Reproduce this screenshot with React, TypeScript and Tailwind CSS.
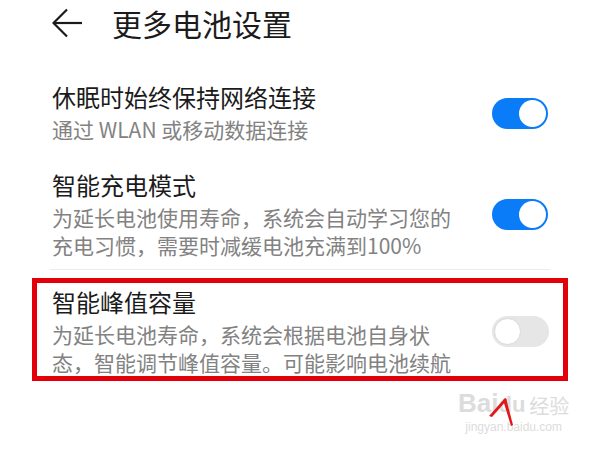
import React from "react";

type Row = { title: string; lines: string[]; on: boolean };

function Toggle({ on }: { on: boolean }) {
  return on ? (
    <div className="flex h-[31px] w-[56px] shrink-0 items-center justify-end rounded-full bg-[#0a7cf7] p-[2px]">
      <div className="h-[27px] w-[27px] rounded-full bg-white" />
    </div>
  ) : (
    <div className="flex h-[31px] w-[57px] shrink-0 items-center justify-start rounded-full bg-[#e6e6e6] p-[2px]">
      <div className="h-[27px] w-[27px] rounded-full border border-[#d9d9d9] bg-white" />
    </div>
  );
}

function SettingText({ row }: { row: Row }) {
  return (
    <div className="flex flex-col">
      <div className="text-[24px] leading-[32px] text-[#1b1b1b]">{row.title}</div>
      <div className="mt-[2px] text-[21px] leading-[28px] text-[#828282]">
        {row.lines.map((l) => (
          <div key={l}>{l}</div>
        ))}
      </div>
    </div>
  );
}

export default function App() {
  const rows: Row[] = [
    { title: "休眠时始终保持网络连接", lines: ["通过 WLAN 或移动数据连接"], on: true },
    {
      title: "智能充电模式",
      lines: ["为延长电池使用寿命，系统会自动学习您的", "充电习惯，需要时减缓电池充满到100%"],
      on: true,
    },
  ];
  const peak: Row = {
    title: "智能峰值容量",
    lines: ["为延长电池寿命，系统会根据电池自身状", "态，智能调节峰值容量。可能影响电池续航"],
    on: false,
  };

  return (
    <div
      className="relative h-[450px] w-[600px] overflow-hidden bg-white"
      style={{ fontFamily: '"Noto Sans CJK SC", "Noto Sans", sans-serif' }}
    >
      <header className="flex h-[46px] items-center pl-[52px]">
        <svg width="31" height="30" viewBox="0 0 31 30" fill="none" stroke="#1b1b1b" strokeWidth="2.2">
          <path d="M15 1.5 L1.5 15 L15 28.5" />
          <path d="M1.5 15 H30" />
        </svg>
        <h1 className="ml-[29px] text-[30px] leading-[40px] text-[#1b1b1b]">更多电池设置</h1>
      </header>

      <main className="px-[32px]">
        <div className="mt-[35px] flex items-center justify-between pl-[20px] pr-[20px]">
          <SettingText row={rows[0]} />
          <div className="mt-[2px]">
            <Toggle on />
          </div>
        </div>

        <div className="mt-[26px] flex items-center justify-between pl-[20px] pr-[20px]">
          <SettingText row={rows[1]} />
          <Toggle on />
        </div>

        <div className="mx-[18px] mt-[10px] h-px bg-[#ebebeb]" />

        <div className="mt-[8px] flex items-center justify-between border-[5px] border-[#e3000b] pl-[15px] pr-[14px] pt-[3px]">
          <SettingText row={peak} />
          <Toggle on={false} />
        </div>
      </main>

      {/* baidu watermark + annotation arrow */}
      <div className="absolute left-[458px] top-[390px] flex flex-col items-center text-[#dcdcdc]">
        <div className="flex items-end leading-none" style={{ fontFamily: '"Liberation Sans", sans-serif' }}>
          <span className="text-[26px] font-bold">Bai</span>
          <span className="text-[22px] font-bold">du</span>
          <span className="ml-[4px] text-[20px]" style={{ fontFamily: '"Noto Sans CJK SC", sans-serif' }}>
            经验
          </span>
        </div>
        <div className="mt-[5px] text-[12px] leading-none" style={{ fontFamily: '"Liberation Sans", sans-serif' }}>
          jingyan.baidu.com
        </div>
      </div>
      <svg className="absolute left-[486px] top-[394px]" width="32" height="36" viewBox="0 0 32 36">
        <path d="M3 22 L19 4 L21 6 L6 23 Z" fill="#e01818" />
        <path d="M17 6 L20 4 L27 31 L25 32 Z" fill="#e01818" />
      </svg>
    </div>
  );
}
